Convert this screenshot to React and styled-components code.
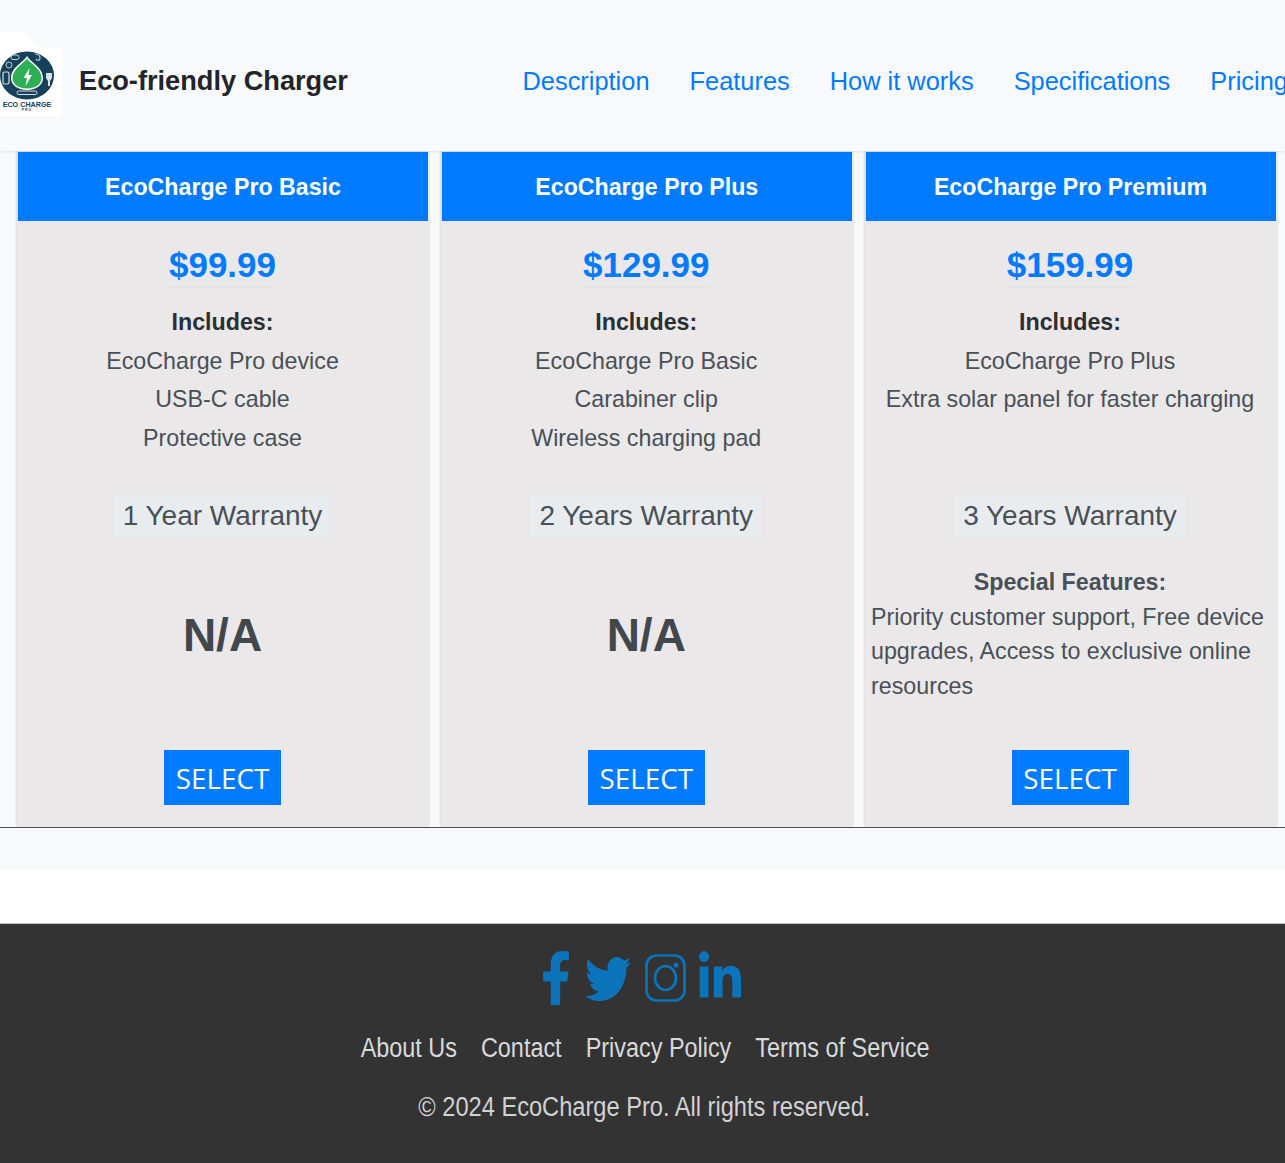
import React from 'react';
import styled, { createGlobalStyle } from 'styled-components';
import { FaFacebookF, FaTwitter, FaLinkedinIn } from 'react-icons/fa';

const GlobalStyle = createGlobalStyle`
    html, body {
        margin: 0;
        padding: 0;
        background: #ffffff;
        overflow: hidden;
    }
    body {
        font-family: "Liberation Sans", Arial, sans-serif;
        color: #495057;
    }
`;

const Page = styled.div`
    width: 1285px;
    height: 1163px;
    overflow: hidden;
    display: flex;
    flex-direction: column;
`;

const Header = styled.header`
    height: 151px;
    flex: none;
    display: flex;
    align-items: center;
    background-color: #f8f9fa;
    box-shadow: 0 1px 3px rgba(0, 0, 0, 0.1);
    position: relative;
    z-index: 1;
`;

const Brand = styled.div`
    display: flex;
    align-items: center;
    gap: 17px;
    width: 503px;
    flex: none;
    margin-top: 13px;
`;

const LogoBox = styled.div`
    width: 62px;
    height: 68px;
    background: #ffffff;
    flex: none;
    position: relative;

    &::before {
        content: '';
        position: absolute;
        left: 0;
        top: -16px;
        width: 40px;
        height: 16px;
        background: #ffffff;
        clip-path: polygon(0 0, 55% 0, 100% 100%, 0 100%);
    }
`;

const BrandName = styled.span`
    margin-bottom: 2px;
    font-size: 27.2px;
    font-weight: 700;
    color: #212529;
    white-space: nowrap;
`;

const Nav = styled.nav`
    display: flex;
    gap: 40px;
    padding-left: 19.5px;
    margin-top: 12px;
    white-space: nowrap;
`;

const NavLink = styled.a`
    font-size: 25.4px;
    color: #007bff;
    text-decoration: none;
`;

const Pricing = styled.section`
    height: 719px;
    flex: none;
    background-color: #f8f9fa;
    overflow: hidden;
`;

const Cards = styled.div`
    height: 675px;
    display: grid;
    grid-template-columns: repeat(3, 411px);
    gap: 12.75px;
    padding: 1px 0 0 17px;
    border-bottom: 1px solid #495057;
    overflow: hidden;
`;

const Card = styled.article`
    height: 675px;
    display: flex;
    flex-direction: column;
    background-color: #ebe8e9;
    box-shadow: 0 0 3px rgba(0, 0, 0, 0.22);
`;

const CardHeader = styled.h3`
    height: 69px;
    flex: none;
    margin: 0;
    padding-top: 2px;
    box-sizing: border-box;
    border-left: 1px solid #cfe0f3;
    display: flex;
    align-items: center;
    justify-content: center;
    background-color: #007bff;
    color: #ffffff;
    font-size: 23.2px;
    font-weight: 700;
`;

const CardBody = styled.div`
    flex: 1;
    display: flex;
    flex-direction: column;
    align-items: center;
    padding: 0 7px;
    text-align: center;
`;

const Price = styled.div`
    margin-top: 23px;
    height: 42px;
    font-size: 35px;
    line-height: 42px;
    font-weight: 700;
    color: #007bff;
    border-bottom: 2px solid #e3e4e8;
`;

const Includes = styled.div`
    height: 192px;
    margin-top: 15px;
    flex: none;
    width: 100%;
`;

const IncludesTitle = styled.div`
    font-size: 23.25px;
    line-height: 38.5px;
    font-weight: 700;
    color: #2b2f33;
`;

const IncludesItem = styled.div`
    font-size: 23.25px;
    line-height: 38.5px;
    color: #495057;
    white-space: nowrap;
`;

const Warranty = styled.div`
    height: 45px;
    flex: none;
    padding: 0 8px;
    font-size: 28px;
    line-height: 42px;
    color: #495057;
    background-color: #e9ecef;
`;

const Extras = styled.div`
    height: 210px;
    flex: none;
    width: 100%;
    display: flex;
    flex-direction: column;
`;

const NotAvailable = styled.div`
    margin-top: 65px;
    font-size: 46px;
    line-height: 60px;
    font-weight: 700;
    color: #42474c;
`;

const SpecialTitle = styled.div`
    margin-top: 25px;
    font-size: 23.25px;
    line-height: 34.5px;
    font-weight: 700;
    color: #495057;
`;

const SpecialText = styled.p`
    margin: 0 0 0 -0.5px;
    font-size: 23.25px;
    line-height: 34.7px;
    color: #495057;
    text-align: left;
`;

const SelectButton = styled.button`
    width: 117px;
    height: 55px;
    flex: none;
    border: none;
    background-color: #007bff;
    color: #ffffff;
    font-family: "Open Sans", sans-serif;
    font-size: 27.8px;
    cursor: pointer;
`;

const Gap = styled.div`
    height: 53px;
    flex: none;
    background: #ffffff;
`;

const Footer = styled.footer`
    flex: 1;
    display: flex;
    flex-direction: column;
    align-items: center;
    background-color: #333333;
    border-top: 1px solid #bdbdbd;
`;

const Socials = styled.div`
    height: 56px;
    margin-top: 26px;
    margin-right: 3px;
    display: flex;
    align-items: center;
    gap: 14px;
    color: #0b74ba;
`;

const FacebookIcon = styled(FaFacebookF).attrs({ preserveAspectRatio: 'none' })`
    width: 30px;
    height: 54px;
`;

const TwitterIcon = styled(FaTwitter).attrs({ preserveAspectRatio: 'none' })`
    width: 46px;
    height: 54px;
    margin-top: 2px;
`;

const LinkedinIcon = styled(FaLinkedinIn).attrs({ preserveAspectRatio: 'none' })`
    width: 42px;
    height: 53px;
    margin-left: -1px;
    margin-bottom: 2px;
`;

const FooterLinks = styled.div`
    display: flex;
    gap: 27.7px;
    margin-top: 27px;
    margin-left: 5px;
    transform: scaleX(0.867);
`;

const FooterLink = styled.a`
    font-size: 27px;
    color: #d8dadc;
    text-decoration: none;
    white-space: nowrap;
`;

const Copyright = styled.p`
    margin: 28px 0 0 4px;
    font-size: 27px;
    white-space: nowrap;
    color: #d0d2d4;
    transform: scaleX(0.875);
`;

const plans = [
    {
        name: 'EcoCharge Pro Basic',
        price: '$99.99',
        items: ['EcoCharge Pro device', 'USB-C cable', 'Protective case'],
        warranty: '1 Year Warranty',
    },
    {
        name: 'EcoCharge Pro Plus',
        price: '$129.99',
        items: ['EcoCharge Pro Basic', 'Carabiner clip', 'Wireless charging pad'],
        warranty: '2 Years Warranty',
    },
    {
        name: 'EcoCharge Pro Premium',
        price: '$159.99',
        items: ['EcoCharge Pro Plus', 'Extra solar panel for faster charging'],
        warranty: '3 Years Warranty',
        special: 'Priority customer support, Free device upgrades, Access to exclusive online resources',
    },
];

const navLinks = ['Description', 'Features', 'How it works', 'Specifications', 'Pricing'];
const footerLinks = ['About Us', 'Contact', 'Privacy Policy', 'Terms of Service'];

const Logo = () => (
    <svg width="62" height="68" viewBox="0 0 62 68">
        <ellipse cx="27" cy="27.5" rx="27" ry="24" fill="#17405a" />
        <circle cx="9" cy="17" r="3" fill="none" stroke="#bcd0d8" strokeWidth="1" />
        <rect x="11" y="7" width="8" height="4.5" rx="2" fill="none" stroke="#bcd0d8" strokeWidth="1" />
        <path d="M35 6c3 0 5 1 5 4s-3 3-4 1" fill="none" stroke="#bcd0d8" strokeWidth="1.2" />
        <rect x="3" y="24" width="6" height="12" rx="1.5" fill="none" stroke="#d5e2e6" strokeWidth="1.2" />
        <path d="M46 25h6v5l-2 3v5h-2v-5l-2-3z" fill="#d5e2e6" />
        <path d="M27 8c3 6 16 11 16 22 0 8-8 12-16 12s-16-4-16-12C11 19 24 14 27 8z" fill="#ffffff" />
        <path d="M27 10.5c3 5 14.5 10 14.5 19.5 0 7-7 10.5-14.5 10.5S12.5 37 12.5 30C12.5 20.5 24 15.5 27 10.5z" fill="#2eae55" />
        <path d="M29.5 20l-6 10h3.5l-1.5 8 6.5-11h-3.500z" fill="#ffffff" />
        <rect x="17" y="43" width="20" height="3.5" rx="1.7" fill="none" stroke="#d5e2e6" strokeWidth="1" />
        <text x="27" y="58.5" textAnchor="middle" fontFamily="Liberation Sans" fontWeight="700" fontSize="7.2" fill="#17405a">ECO CHARGE</text>
        <text x="27" y="63" textAnchor="middle" fontFamily="Liberation Sans" fontWeight="700" fontSize="3.5" letterSpacing="1" fill="#17405a">PRO</text>
    </svg>
);

const InstagramIcon = () => (
    <svg width="41" height="48" viewBox="0 0 41 48" fill="none" stroke="currentColor" strokeWidth="2.7">
        <rect x="1.5" y="1.5" width="38" height="45" rx="10" />
        <ellipse cx="20.5" cy="24" rx="10.5" ry="12" />
        <circle cx="31" cy="11" r="2.6" fill="currentColor" stroke="none" />
    </svg>
);

const PlanCard = ({ plan }) => (
    <Card>
        <CardHeader>{plan.name}</CardHeader>
        <CardBody>
            <Price>{plan.price}</Price>
            <Includes>
                <IncludesTitle>Includes:</IncludesTitle>
                {plan.items.map(item => (
                    <IncludesItem key={item}>{item}</IncludesItem>
                ))}
            </Includes>
            <Warranty>{plan.warranty}</Warranty>
            <Extras>
                {plan.special ? (
                    <>
                        <SpecialTitle>Special Features:</SpecialTitle>
                        <SpecialText>{plan.special}</SpecialText>
                    </>
                ) : (
                    <NotAvailable>N/A</NotAvailable>
                )}
            </Extras>
            <SelectButton>SELECT</SelectButton>
        </CardBody>
    </Card>
);

const App = () => (
    <Page>
        <GlobalStyle />
        <Header>
            <Brand>
                <LogoBox>
                    <Logo />
                </LogoBox>
                <BrandName>Eco-friendly Charger</BrandName>
            </Brand>
            <Nav>
                {navLinks.map(link => (
                    <NavLink key={link} href="#">{link}</NavLink>
                ))}
            </Nav>
        </Header>
        <Pricing>
            <Cards>
                {plans.map(plan => (
                    <PlanCard key={plan.name} plan={plan} />
                ))}
            </Cards>
        </Pricing>
        <Gap />
        <Footer>
            <Socials>
                <FacebookIcon />
                <TwitterIcon />
                <InstagramIcon />
                <LinkedinIcon />
            </Socials>
            <FooterLinks>
                {footerLinks.map(link => (
                    <FooterLink key={link} href="#">{link}</FooterLink>
                ))}
            </FooterLinks>
            <Copyright>© 2024 EcoCharge Pro. All rights reserved.</Copyright>
        </Footer>
    </Page>
);

export default App;
